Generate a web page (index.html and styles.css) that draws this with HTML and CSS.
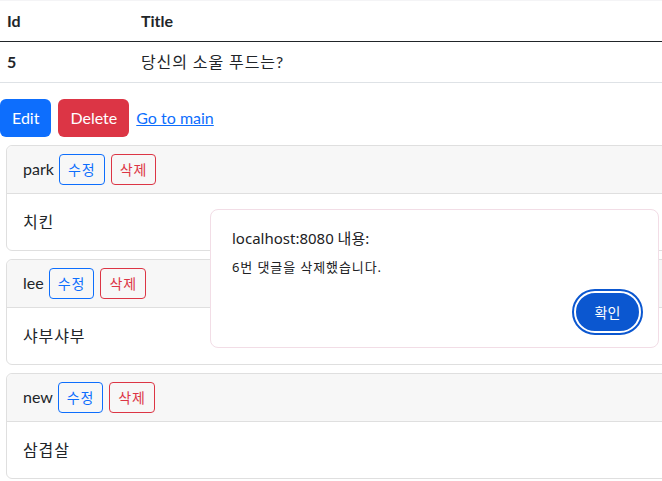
FILE: index.html
```html
<!DOCTYPE html>
<html lang="ko">

<head>
    <meta charset="UTF-8">
    <meta name="viewport" content="width=device-width, initial-scale=1.0">
    <title>게시글 상세</title>
    <link rel="stylesheet" href="styles.css">
</head>

<body>
    <table class="table">
        <thead>
            <tr>
                <th class="col-id">Id</th>
                <th>Title</th>
            </tr>
        </thead>
        <tbody>
            <tr>
                <th class="col-id">5</th>
                <td class="ko">당신의 소울 푸드는?</td>
            </tr>
        </tbody>
    </table>

    <div class="actions">
        <a class="btn btn-primary" href="#">Edit</a>
        <a class="btn btn-danger" href="#">Delete</a>
        <a class="link" href="#">Go to main</a>
    </div>

    <div class="comments">
        <div class="card">
            <div class="card-header">park <button class="btn-sm btn-outline-primary">수정</button> <button
                    class="btn-sm btn-outline-danger">삭제</button></div>
            <div class="card-body ko">치킨</div>
        </div>
        <div class="card">
            <div class="card-header">lee <button class="btn-sm btn-outline-primary">수정</button> <button
                    class="btn-sm btn-outline-danger">삭제</button></div>
            <div class="card-body ko">샤부샤부</div>
        </div>
        <div class="card">
            <div class="card-header">new <button class="btn-sm btn-outline-primary">수정</button> <button
                    class="btn-sm btn-outline-danger">삭제</button></div>
            <div class="card-body ko">삼겹살</div>
        </div>
    </div>

    <div class="alert-dialog">
        <div class="alert-title">localhost:8080 내용:</div>
        <div class="alert-msg ko">6번 댓글을 삭제했습니다.</div>
        <div class="alert-foot">
            <button class="alert-ok">확인</button>
        </div>
    </div>
</body>

</html>
```

FILE: styles.css
```css
html,
body {
    margin: 0;
    overflow: hidden;
}

body {
    font-family: "Lato", "Noto Sans CJK KR", sans-serif;
    font-size: 16px;
    line-height: 1.5;
    color: #212529;
    background: #fff;
    border-top: 1px solid #f4f4f6;
    width: 700px;
}

.ko {
    letter-spacing: 0.9px;
}

.table {
    width: 100%;
    border-collapse: collapse;
    margin-bottom: 16px;
}

.table th,
.table td {
    text-align: left;
    padding: 8px 7px;
    border-bottom: 1px solid #dee2e6;
}

.table thead th {
    border-bottom: 1px solid #212529;
}

.table th {
    font-weight: bold;
}

.col-id {
    width: 120px;
}

.actions {
    display: flex;
    align-items: center;
    gap: 7px;
}

.btn {
    display: inline-block;
    padding: 6px 11px;
    border-radius: 6px;
    color: #fff;
    text-decoration: none;
    border: 1px solid transparent;
}

.btn-primary {
    background-color: #0d6efd;
}

.btn-danger {
    background-color: #dc3545;
}

.link {
    color: #0d6efd;
    text-decoration: underline;
}

.comments {
    margin: 8px 0 0 6px;
}

.card {
    border: 1px solid #dfdfdf;
    border-radius: 6px;
    margin-bottom: 8px;
}

.card-header {
    padding: 8px 16px;
    background-color: #f7f7f7;
    border-bottom: 1px solid #dfdfdf;
    border-radius: 6px 6px 0 0;
}

.card-body {
    padding: 16px;
}

.btn-sm {
    font-family: inherit;
    font-size: 14px;
    line-height: 1.5;
    letter-spacing: 0.9px;
    padding: 4px 8px;
    border-radius: 4px;
    background: transparent;
    border: 1px solid;
}

.btn-outline-primary {
    color: #0d6efd;
    border-color: #0d6efd;
    margin-left: 1px;
}

.btn-outline-danger {
    color: #dc3545;
    border-color: #dc3545;
    margin-left: 2px;
}

.alert-dialog {
    position: absolute;
    left: 210px;
    top: 209px;
    width: 410px;
    padding: 16px 16px 14px 21px;
    background: #fff;
    border: 1px solid #f2dde6;
    border-radius: 8px;
    font-family: "Noto Sans", "Noto Sans CJK KR", sans-serif;
}

.alert-title {
    font-size: 15px;
    line-height: 24px;
    color: #202124;
}

.alert-msg {
    margin-top: 8px;
    font-size: 13px;
    line-height: 18px;
    color: #202124;
}

.alert-foot {
    display: flex;
    justify-content: flex-end;
    margin-top: 15px;
}

.alert-ok {
    font-family: inherit;
    font-size: 14px;
    color: #fff;
    background: #0b57d0;
    border: 2px solid #fff;
    outline: 2px solid #0b57d0;
    border-radius: 21px;
    width: 67px;
    height: 42px;
    margin-right: 1px;
}
```
